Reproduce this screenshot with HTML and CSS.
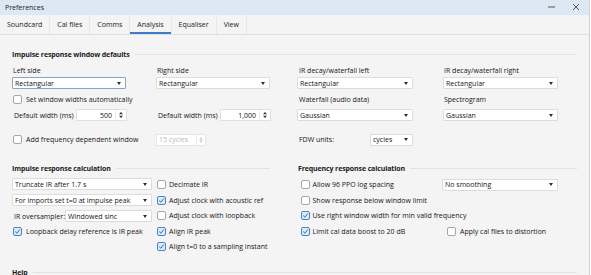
FILE: index.html
```html
<!DOCTYPE html>
<html>
<head>
<meta charset="utf-8">
<title>Preferences</title>
<link rel="stylesheet" href="styles.css">
</head>
<body>
<div class="window">
  <div class="titlebar">
    <span class="title">Preferences</span>
    <svg class="winctl" width="40" height="15" viewBox="0 0 40 15">
      <line x1="2" y1="7" x2="9" y2="7" stroke="#555" stroke-width="1"/>
      <path d="M27 4 L33 10 M33 4 L27 10" stroke="#444" stroke-width="0.9" fill="none"/>
    </svg>
  </div>
  <div class="tabs">
    <div class="tab">Soundcard</div>
    <div class="tab">Cal files</div>
    <div class="tab">Comms</div>
    <div class="tab active">Analysis</div>
    <div class="tab">Equaliser</div>
    <div class="tab">View</div>
  </div>
  <div class="content">
    <section class="sec1">
      <div class="heading"><span>Impulse response window defaults</span></div>
      <div class="grid4">
        <div class="cell lbl">Left side</div>
        <div class="cell lbl">Right side</div>
        <div class="cell lbl">IR decay/waterfall left</div>
        <div class="cell lbl">IR decay/waterfall right</div>

        <div class="cell"><div class="combo focus w114"><span>Rectangular</span><i class="arrow"></i></div></div>
        <div class="cell"><div class="combo w114"><span>Rectangular</span><i class="arrow"></i></div></div>
        <div class="cell"><div class="combo w116 shift"><span>Rectangular</span><i class="arrow"></i></div></div>
        <div class="cell"><div class="combo w115"><span>Rectangular</span><i class="arrow"></i></div></div>

        <div class="cell"><label class="check"><span class="cb"></span>Set window widths automatically</label></div>
        <div class="cell"></div>
        <div class="cell lbl">Waterfall (audio data)</div>
        <div class="cell lbl">Spectrogram</div>

        <div class="cell top">
          <div class="spinrow"><span class="spinlbl">Default width (ms)</span>
            <div class="spin"><span class="val">500</span><span class="arrows"><svg width="10" height="10" viewBox="0 0 10 10"><path d="M3 4.3 L5 2 L7 4.3 Z M3 5.7 L5 8 L7 5.7 Z" fill="#333"/></svg></span></div>
          </div>
        </div>
        <div class="cell top">
          <div class="spinrow"><span class="spinlbl">Default width (ms)</span>
            <div class="spin"><span class="val">1,000</span><span class="arrows"><svg width="10" height="10" viewBox="0 0 10 10"><path d="M3 4.3 L5 2 L7 4.3 Z M3 5.7 L5 8 L7 5.7 Z" fill="#333"/></svg></span></div>
          </div>
        </div>
        <div class="cell top"><div class="combo w116 shift"><span>Gaussian</span><i class="arrow"></i></div></div>
        <div class="cell top"><div class="combo w115"><span>Gaussian</span><i class="arrow"></i></div></div>

        <div class="cell"><label class="check"><span class="cb"></span>Add frequency dependent window</label></div>
        <div class="cell">
          <div class="spin disabled"><span class="val">15 cycles</span><span class="arrows"><svg width="9" height="10" viewBox="0 0 9 10"><path d="M2.5 4.3 L4.5 2 L6.5 4.3 Z M2.5 5.7 L4.5 8 L6.5 5.7 Z" fill="#c4c4c4"/></svg></span></div>
        </div>
        <div class="cell">
          <span class="fdwlbl">FDW units:</span>
          <div class="combo w43"><span>cycles</span><i class="arrow"></i></div>
        </div>
        <div class="cell"></div>
      </div>
    </section>

    <div class="sec2">
      <section class="irc">
        <div class="heading"><span>Impulse response calculation</span></div>
        <div class="irc-body">
          <div class="combos">
            <div class="combo w140"><span>Truncate IR after 1.7 s</span><i class="arrow"></i></div>
            <div class="combo w140"><span>For imports set t=0 at impulse peak</span><i class="arrow"></i></div>
            <div class="ovs"><span class="ovslbl">IR oversampler:</span><div class="combo w87"><span>Windowed sinc</span><i class="arrow"></i></div></div>
            <label class="check loop"><span class="cb on"><svg width="7" height="7" viewBox="0 0 7 7"><path d="M1.2 3.6 L2.8 5.2 L5.8 1.6" stroke="#2b6cb3" stroke-width="1" fill="none"/></svg></span>Loopback delay reference is IR peak</label>
          </div>
          <div class="checks">
            <label class="check row"><span class="cb"></span>Decimate IR</label>
            <label class="check row"><span class="cb on"><svg width="7" height="7" viewBox="0 0 7 7"><path d="M1.2 3.6 L2.8 5.2 L5.8 1.6" stroke="#2b6cb3" stroke-width="1" fill="none"/></svg></span>Adjust clock with acoustic ref</label>
            <label class="check row"><span class="cb"></span>Adjust clock with loopback</label>
            <label class="check row"><span class="cb on"><svg width="7" height="7" viewBox="0 0 7 7"><path d="M1.2 3.6 L2.8 5.2 L5.8 1.6" stroke="#2b6cb3" stroke-width="1" fill="none"/></svg></span>Align IR peak</label>
            <label class="check row"><span class="cb on"><svg width="7" height="7" viewBox="0 0 7 7"><path d="M1.2 3.6 L2.8 5.2 L5.8 1.6" stroke="#2b6cb3" stroke-width="1" fill="none"/></svg></span>Align t=0 to a sampling instant</label>
          </div>
        </div>
      </section>
      <section class="frc">
        <div class="heading"><span>Frequency response calculation</span></div>
        <div class="frc-body">
          <div class="frow">
            <label class="check ind"><span class="cb"></span>Allow 96 PPO log spacing</label>
            <div class="combo w116"><span>No smoothing</span><i class="arrow"></i></div>
          </div>
          <div class="frow">
            <label class="check ind"><span class="cb"></span>Show response below window limit</label>
          </div>
          <div class="frow">
            <label class="check ind wide"><span class="cb on"><svg width="7" height="7" viewBox="0 0 7 7"><path d="M1.2 3.6 L2.8 5.2 L5.8 1.6" stroke="#2b6cb3" stroke-width="1" fill="none"/></svg></span>Use right window width for min valid frequency</label>
          </div>
          <div class="frow">
            <label class="check ind"><span class="cb on"><svg width="7" height="7" viewBox="0 0 7 7"><path d="M1.2 3.6 L2.8 5.2 L5.8 1.6" stroke="#2b6cb3" stroke-width="1" fill="none"/></svg></span>Limit cal data boost to 20 dB</label>
            <label class="check ind2"><span class="cb"></span>Apply cal files to distortion</label>
          </div>
        </div>
      </section>
    </div>

    <div class="heading help"><span>Help</span></div>
  </div>
</div>
</body>
</html>
```

FILE: styles.css
```css
* { box-sizing: border-box; margin: 0; padding: 0; }
html, body { background: #ffffff; }
body {
  width: 591px;
  height: 275px;
  overflow: hidden;
  font-family: "Open Sans", "Noto Sans", sans-serif;
  font-size: 7px;
  line-height: 1;
  color: #151515;
}
.window {
  width: 590px;
  height: 275px;
  background: #f4f4f4;
  border-right: 1px solid #d3d3d3;
  display: flex;
  flex-direction: column;
  overflow: hidden;
}
.titlebar {
  height: 15px;
  flex: none;
  background: #dde8f5;
  display: flex;
  align-items: center;
  justify-content: space-between;
  padding-left: 5px;
}
.title { color: #1a1a1a; }
.winctl { margin-right: 3px; display: block; }

.tabs {
  height: 20px;
  flex: none;
  display: flex;
  border-bottom: 1px solid #e0e0e0;
  background: #f4f4f4;
}
.tab {
  padding: 0 7px 0 7px;
  display: flex;
  align-items: center;
  border-right: 1px solid #e8e8e8;
  position: relative;
  color: #222;
}
.tab.active::after {
  content: "";
  position: absolute;
  left: 0; right: 0; bottom: 0;
  height: 2px;
  background: #3d7bc8;
}

.content {
  padding: 13px 12px 0 12px;
}
.heading {
  display: flex;
  align-items: center;
  gap: 5px;
  height: 12px;
  font-weight: 700;
  color: #1a1a1a;
  letter-spacing: -0.12px;
}
.heading::after {
  content: "";
  flex: 1;
  height: 1px;
  background: #e1e1e1;
}

.grid4 {
  display: grid;
  grid-template-columns: 144px 142px 145px 1fr;
  grid-template-rows: 13px 12px 20px 24px 13px;
  margin-top: 4px;
}
.cell { display: flex; align-items: center; }
.cell.top { align-items: flex-start; }
.lbl { padding-left: 1px; }

.combo {
  height: 12px;
  background: #fff;
  border: 1px solid #dcdcdc;
  border-radius: 1px;
  display: flex;
  align-items: center;
  justify-content: space-between;
  padding: 0 4px 0 2px;
  white-space: nowrap;
}
.combo.focus { border-color: #8aa3c6; }
.combo.shift { margin-left: -1px; }
.arrow {
  width: 0; height: 0;
  border-left: 2.5px solid transparent;
  border-right: 2.5px solid transparent;
  border-top: 3px solid #2e2e2e;
  flex: none;
}
.w114 { width: 114px; }
.w115 { width: 115px; }
.w116 { width: 116px; }
.w140 { width: 140px; }
.w87 { width: 87px; }
.w43 { width: 43px; }

.check {
  display: flex;
  align-items: center;
  gap: 4px;
  white-space: nowrap;
  padding-left: 1px;
}
.cb {
  width: 9px;
  height: 9px;
  border: 1px solid #a8a8a8;
  border-radius: 2px;
  background: #fff;
  flex: none;
  display: flex;
  align-items: center;
  justify-content: center;
}
.cb.on {
  border-color: #4a86c8;
  background: #dce9f8;
}
.cb svg { display: block; }

.spinrow { display: flex; align-items: center; padding-left: 2px; }
.spinlbl { width: 62px; }
.spin {
  display: flex;
  height: 12px;
  background: #fff;
  border: 1px solid #e0e0e0;
}
.spin .val {
  width: 38px;
  display: flex;
  align-items: center;
  justify-content: flex-end;
  padding-right: 3px;
}
.spin .arrows {
  width: 11px;
  display: flex;
  align-items: center;
  justify-content: center;
  border-left: 1px solid #ececec;
}
.spin.disabled {
  width: 50px;
  border-color: #e6e6e6;
  color: #b8b8b8;
}
.spin.disabled .val {
  width: 40px;
  justify-content: flex-start;
  padding-left: 2px;
}
.spin.disabled .arrows { width: 9px; }
.fdwlbl { width: 72px; padding-left: 1px; }

.sec2 {
  display: grid;
  grid-template-columns: 258px 279px;
  column-gap: 28px;
  margin-top: 16px;
}
.irc-body {
  display: flex;
  gap: 5px;
  margin-top: 3px;
}
.combos {
  width: 140px;
  display: flex;
  flex-direction: column;
  gap: 4px;
  padding-top: 1px;
}
.ovs { display: flex; align-items: center; }
.ovslbl { width: 53px; padding-left: 2px; }
.check.loop { height: 12px; margin-top: -1px; }
.checks { display: flex; flex-direction: column; }
.check.row { height: 15.5px; padding-left: 0; gap: 3px; }

.frc-body { margin-top: 3px; display: flex; flex-direction: column; }
.frow {
  height: 15.5px;
  display: grid;
  grid-template-columns: 144px 1fr;
  align-items: center;
}
.check.ind { padding-left: 3px; gap: 2.5px; }
.check.wide { grid-column: 1 / 3; }
.check.ind2 { padding-left: 5px; gap: 4px; }

.help { margin-top: 11.5px; }
```
